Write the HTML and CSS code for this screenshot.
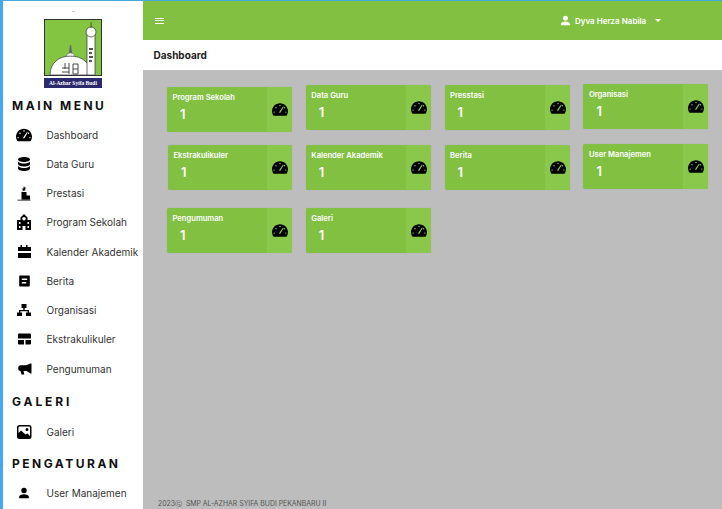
FILE: index.html
```html
<!DOCTYPE html>
<html lang="en">
<head>
    <meta charset="UTF-8">
    <meta name="viewport" content="width=device-width, initial-scale=1.0">
    <link rel="stylesheet" href="styles.css">
    <title>Dashboard</title>
</head>
<body>

<svg class="sprites" width="0" height="0">
    <symbol id="gauge" viewBox="0 32 576 448"><path fill-rule="evenodd" d="M288 32C128.940 32 0 160.940 0 320c0 52.800 14.250 102.260 39.060 144.800 5.610 9.620 16.300 15.200 27.440 15.200h443c11.140 0 21.830-5.580 27.440-15.200C561.750 422.260 576 372.800 576 320c0-159.060-128.940-288-288-288zM288 84a26 26 0 110 52 26 26 0 010-52zM144 164a26 26 0 110 52 26 26 0 010-52zM76 324a26 26 0 110 52 26 26 0 010-52zM500 324a26 26 0 110 52 26 26 0 010-52zM452 170a24 24 0 110 48 24 24 0 010-48zM396 150l26 18-110 188c-8 14-24 26-40 24-12-8-14-28-6-40z"/></symbol>
    <symbol id="user" viewBox="0 0 16 16"><circle cx="8" cy="4.600" r="3.600"/><path d="M1.500 15v-1.600C1.500 10.800 4.500 9.600 8 9.600s6.500 1.200 6.500 3.800V15z"/></symbol>
</svg>

<div class="app">
    <aside class="sidebar">
        <div class="logo-dot"></div>
        <div class="logo">
            <svg class="logo-art" viewBox="0 0 58 57">
                <rect x="0.500" y="0.500" width="57" height="56" fill="#83c441" stroke="#333" stroke-width="1"/>
                <path d="M6 56C6 44 15 37 26.500 37S47 44 47 56z" fill="#fff" stroke="#333" stroke-width="0.700"/>
                <path d="M22 37c1-2 3-3 4.500-3s3.500 1 4.500 3z" fill="#fff" stroke="#555" stroke-width="0.500"/>
                <path d="M26 26h1l1.200 8h-3.400z" fill="#667"/>
                <rect x="43" y="15" width="8" height="41" fill="#fff" stroke="#333" stroke-width="0.700"/>
                <circle cx="47" cy="13" r="5" fill="#fff" stroke="#333" stroke-width="0.700"/>
                <path d="M46.700 3h.7v6h-.7z" fill="#333"/>
                <path d="M45 29h4v2h-4zM45 33h3v2h-3zM45 37h4v2h-4zM45 41h3v2h-3z" fill="#555"/>
                <path d="M18 49h7M21 44v6M25 44v11M18 53h7M29 45h5v10h-5zM29 50h5" fill="none" stroke="#333" stroke-width="0.900"/>
            </svg>
            <div class="logo-label">Al-Azhar Syifa Budi</div>
        </div>

        <h3 class="menu-title menu-title-main">MAIN MENU</h3>
        <a class="menu-item"><svg class="menu-icon"><use href="#gauge"/></svg>Dashboard</a>
        <a class="menu-item">
            <svg class="menu-icon" viewBox="0 0 16 16"><path d="M8 1c3.500 0 6 1 6 2.500S11.500 6 8 6 2 5 2 3.500 4.500 1 8 1zM2 5.500C3 7 5.500 7.500 8 7.500s5-.5 6-2V8c0 1.500-2.500 2.500-6 2.500S2 9.500 2 8zM2 10c1 1.500 3.500 2 6 2s5-.5 6-2v2.500C14 14 11.500 15 8 15s-6-1-6-2.500z"/></svg>
            Data Guru
        </a>
        <a class="menu-item">
            <svg class="menu-icon" viewBox="0 0 16 16"><path d="M8 1l.7 1.500 1.600.2-1.200 1.100.3 1.600L8 5.600l-1.400.8.300-1.600-1.200-1.100 1.600-.2zM5.500 7h5v3.500H14v4H5.500zM1.500 14.700h13v.8h-13z"/></svg>
            Prestasi
        </a>
        <a class="menu-item">
            <svg class="menu-icon" viewBox="0 0 16 16"><path fill-rule="evenodd" d="M8 0l3.500 3.500V6H15v10H9.500v-4h-3v4H1V6h3.500V3.500zM8 3a1.800 1.800 0 100 3.600A1.800 1.800 0 008 3zM3 8v2h1.500V8zM3 12v2h1.500v-2zM11.500 8v2H13V8zM11.500 12v2H13v-2z"/></svg>
            Program Sekolah
        </a>
        <a class="menu-item">
            <svg class="menu-icon" viewBox="0 0 16 16"><path d="M4.500 1H6v2h4V1h1.500v2H15v4H2V3h2.500zM2 9h13v5H2z"/></svg>
            Kalender Akademik
        </a>
        <a class="menu-item">
            <svg class="menu-icon" viewBox="0 0 16 16"><path fill-rule="evenodd" d="M4 2.500h9a.8.8 0 01.8.8v9.400a.8.8 0 01-.8.8H4a.8.8 0 01-.8-.8V3.300a.8.8 0 01.8-.8zM5.800 5.500V7h5.400V5.500zM5.800 9v1.500h4.400V9z"/></svg>
            Berita
        </a>
        <a class="menu-item">
            <svg class="menu-icon" viewBox="0 0 16 16"><path d="M5.500 2h5v4H8.700v2H13v2.500h2V14h-5v-3.500h1.700V9.200H4.300v1.300H6V14H1v-3.500h2V8h4.300V6H5.500z"/></svg>
            Organisasi
        </a>
        <a class="menu-item">
            <svg class="menu-icon" viewBox="0 0 16 16"><path d="M3 2.500h11a1 1 0 011 1V7.500H2V3.500a1 1 0 011-1zM2 9h6v4.500H3a1 1 0 01-1-1zM9.500 9H15v3.500a1 1 0 01-1 1H9.500z"/></svg>
            Ekstrakulikuler
        </a>
        <a class="menu-item">
            <svg class="menu-icon" viewBox="0 0 16 16"><path d="M14.500 2.500h1v10h-1l-4-2.500H7.500l.8 3.500H5.500l-1-3.500C3 10 2.200 9 2.200 7.200s1-3 2.500-3H10z"/></svg>
            Pengumuman
        </a>

        <h3 class="menu-title menu-title-galeri">GALERI</h3>
        <a class="menu-item">
            <svg class="menu-icon" viewBox="0 0 16 16"><path fill-rule="evenodd" d="M3.500 1h9.500a2.500 2.500 0 012.500 2.500v9A2.500 2.500 0 0113 15H3.500A2.500 2.500 0 011 12.500v-9A2.500 2.500 0 013.500 1zm0 1.500a1 1 0 00-1 1V9l2.500-2.500L9.500 10.500l2-1 2.500 2.500V3.500a1 1 0 00-1-1zM11 4a1.500 1.500 0 110 3 1.500 1.500 0 010-3z"/></svg>
            Galeri
        </a>

        <h3 class="menu-title menu-title-atur">PENGATURAN</h3>
        <a class="menu-item"><svg class="menu-icon menu-icon-small"><use href="#user"/></svg>User Manajemen</a>
    </aside>

    <div class="main">
        <header class="topbar">
            <div class="burger"><span></span><span></span><span></span></div>
            <div class="account">
                <svg class="account-icon"><use href="#user"/></svg>
                <span>Dyva Herza Nabila</span>
                <span class="caret"></span>
            </div>
        </header>
        <div class="page-title">Dashboard</div>

        <div class="content">
            <div class="cards">
                <div class="card card-low">
                    <div class="card-body"><p class="card-label">Program Sekolah</p><p class="card-value">1</p></div>
                    <div class="card-side"><svg class="card-icon"><use href="#gauge"/></svg></div>
                </div>
                <div class="card">
                    <div class="card-body"><p class="card-label">Data Guru</p><p class="card-value">1</p></div>
                    <div class="card-side"><svg class="card-icon"><use href="#gauge"/></svg></div>
                </div>
                <div class="card">
                    <div class="card-body"><p class="card-label">Presstasi</p><p class="card-value">1</p></div>
                    <div class="card-side"><svg class="card-icon"><use href="#gauge"/></svg></div>
                </div>
                <div class="card card-high">
                    <div class="card-body"><p class="card-label">Organisasi</p><p class="card-value">1</p></div>
                    <div class="card-side"><svg class="card-icon"><use href="#gauge"/></svg></div>
                </div>
                <div class="card card-right">
                    <div class="card-body"><p class="card-label">Ekstrakulikuler</p><p class="card-value">1</p></div>
                    <div class="card-side"><svg class="card-icon"><use href="#gauge"/></svg></div>
                </div>
                <div class="card">
                    <div class="card-body"><p class="card-label">Kalender Akademik</p><p class="card-value">1</p></div>
                    <div class="card-side"><svg class="card-icon"><use href="#gauge"/></svg></div>
                </div>
                <div class="card">
                    <div class="card-body"><p class="card-label">Berita</p><p class="card-value">1</p></div>
                    <div class="card-side"><svg class="card-icon"><use href="#gauge"/></svg></div>
                </div>
                <div class="card card-high">
                    <div class="card-body"><p class="card-label">User Manajemen</p><p class="card-value">1</p></div>
                    <div class="card-side"><svg class="card-icon"><use href="#gauge"/></svg></div>
                </div>
                <div class="card">
                    <div class="card-body"><p class="card-label">Pengumuman</p><p class="card-value">1</p></div>
                    <div class="card-side"><svg class="card-icon"><use href="#gauge"/></svg></div>
                </div>
                <div class="card">
                    <div class="card-body"><p class="card-label">Galeri</p><p class="card-value">1</p></div>
                    <div class="card-side"><svg class="card-icon"><use href="#gauge"/></svg></div>
                </div>
            </div>
            <footer class="footer">2023&#9426;&nbsp;&nbsp;SMP AL-AZHAR SYIFA BUDI PEKANBARU II</footer>
        </div>
    </div>
</div>

</body>
</html>
```

FILE: styles.css
```css
html, body {
    margin: 0;
    height: 100%;
    overflow: hidden;
}

body {
    font-family: Inter, "Liberation Sans", sans-serif;
    background: #bdbdbd;
}

.sprites {
    display: block;
    height: 0;
}

.app {
    display: flex;
    height: 509px;
    box-sizing: border-box;
    border-top: 1px solid #45a9e0;
    border-left: 3px solid #3fa9f5;
}

/* sidebar */
.sidebar {
    width: 140px;
    flex-shrink: 0;
    background: #fff;
    overflow: hidden;
}

.logo-dot {
    width: 3px;
    height: 1px;
    margin: 10px 0 0 69px;
    background: #ccc;
}

.logo {
    width: 58px;
    margin: 7px 0 0 41px;
}

.logo-art {
    display: block;
    width: 58px;
    height: 57px;
}

.logo-label {
    margin-top: 2px;
    height: 10px;
    line-height: 10px;
    background: #2b2a6c;
    color: #fff;
    font-family: "Liberation Serif", serif;
    font-size: 5.500px;
    font-weight: bold;
    text-align: center;
    white-space: nowrap;
}

.menu-title {
    margin: 0;
    padding-left: 9px;
    height: 14px;
    line-height: 14px;
    font-size: 12px;
    font-weight: 700;
    letter-spacing: 2.500px;
    color: #111;
}

.menu-title-main {
    margin-top: 11px;
    margin-bottom: -1px;
}

.menu-title-galeri {
    margin-top: 12px;
    letter-spacing: 2.900px;
}

.menu-title-atur {
    margin-top: 10px;
}

.menu-item {
    display: flex;
    align-items: center;
    height: 29.250px;
    padding-left: 13px;
    font-size: 10px;
    color: #333;
    white-space: nowrap;
}

.menu-title + .menu-item {
    margin-top: 8px;
}

.menu-icon {
    width: 16px;
    height: 16px;
    margin-right: 14.500px;
    flex-shrink: 0;
    fill: #000;
}

.menu-icon-small {
    width: 12px;
    height: 12px;
    margin: 0 16.500px 0 2px;
}

/* top */
.main {
    flex: 1;
    display: flex;
    flex-direction: column;
    min-width: 0;
}

.topbar {
    height: 39px;
    background: #82c042;
    display: flex;
    align-items: center;
    justify-content: space-between;
    color: #fff;
    flex-shrink: 0;
}

.burger {
    width: 9px;
    margin-left: 12px;
    display: flex;
    flex-direction: column;
    gap: 1.500px;
}

.burger span {
    display: block;
    height: 1px;
    background: #fff;
}

.account {
    display: flex;
    align-items: center;
    width: 162px;
    font-size: 8px;
    font-weight: 600;
}

.account-icon {
    width: 11px;
    height: 11px;
    margin-right: 4px;
    fill: #fff;
}

.caret {
    margin-left: 8.500px;
    border-left: 3px solid transparent;
    border-right: 3px solid transparent;
    border-top: 3px solid #fff;
}

.page-title {
    height: 30px;
    line-height: 31px;
    padding-left: 10.500px;
    background: #fff;
    font-size: 10px;
    font-weight: 700;
    color: #222;
    flex-shrink: 0;
}

/* cards */
.content {
    flex: 1;
    display: flex;
    flex-direction: column;
    justify-content: space-between;
    padding: 15px 0 0 24px;
}

.cards {
    display: grid;
    grid-template-columns: repeat(4, 125px);
    grid-template-rows: 45px 48px 45px;
    column-gap: 13.800px;
    row-gap: 15px;
    align-items: start;
}

.card {
    display: flex;
    height: 45px;
    border-radius: 2px;
    overflow: hidden;
    background: #82c042;
    color: #fff;
    box-shadow: 0 0 1px rgba(0, 0, 0, 0.15);
}

.card-low {
    margin-top: 2px;
}

.card-high {
    margin-top: -1px;
}

.card-right {
    margin-left: 1px;
}

.card-body {
    flex: 1;
    padding: 5px 0 0 5.500px;
}

.card-side {
    width: 25px;
    background: #8ac84c;
    display: flex;
    align-items: center;
    justify-content: center;
}

.card-label {
    margin: 0;
    font-size: 7.600px;
    font-weight: 600;
    line-height: 11px;
    white-space: nowrap;
}

.card-value {
    margin: 3px 0 0 7.500px;
    font-size: 13px;
    font-weight: 600;
    line-height: 16px;
}

.card-icon {
    width: 16px;
    height: 13px;
    margin: 0 0 1px 1px;
    fill: #000;
}

.footer {
    height: 11px;
    line-height: 11px;
    margin: 0 0 0 -9px;
    font-size: 6.900px;
    color: #555;
    white-space: nowrap;
}
```
